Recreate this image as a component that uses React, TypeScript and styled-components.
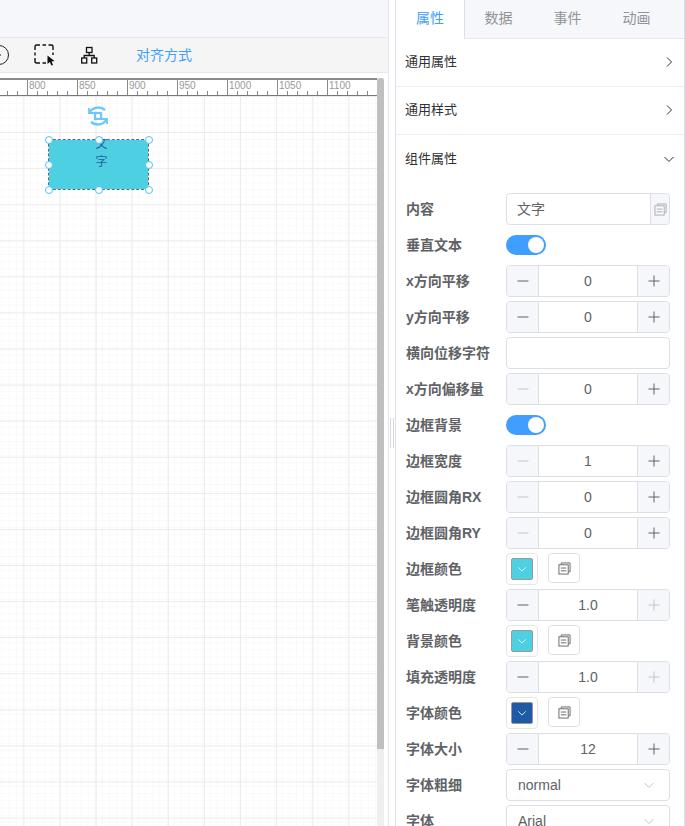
import React from "react";
import styled, { createGlobalStyle } from "styled-components";

const Global = createGlobalStyle`
  html, body {
    margin: 0;
    padding: 0;
    background: #fff;
    overflow: hidden;
  }
  * { box-sizing: border-box; }
  #root {
    font-family: "Liberation Sans", "Noto Sans CJK SC", sans-serif;
  }
`;

const Page = styled.div`
  width: 685px;
  height: 826px;
  display: flex;
  overflow: hidden;
`;

const Left = styled.div`
  width: 388px;
  height: 100%;
  display: flex;
  flex-direction: column;
  flex: none;
`;

const TopBar = styled.div`
  height: 38px;
  background: #f5f7fa;
  border-bottom: 1px solid #e4e7ed;
  flex: none;
`;

const Toolbar = styled.div`
  height: 35px;
  background: #f5f5f5;
  border-bottom: 1px solid #e4e7ed;
  display: flex;
  align-items: center;
  flex: none;
`;

const ToolIcon = styled.svg<{ $ml: number }>`
  margin-left: ${(p) => p.$ml}px;
  flex: none;
  display: block;
`;

const AlignText = styled.span`
  margin-left: 37px;
  padding-bottom: 3px;
  font-size: 14px;
  color: #409eff;
`;

const CanvasWrap = styled.div`
  margin-top: 5px;
  flex: 1;
  display: flex;
  min-height: 0;
`;

const CanvasCol = styled.div`
  width: 377px;
  flex: none;
  display: flex;
  flex-direction: column;
  overflow: hidden;
`;

const Ruler = styled.div`
  height: 18px;
  flex: none;
  display: flex;
  border-top: 2px solid #8a8a8a;
  border-bottom: 1px solid #777;
  padding-left: 27px;
  background-image: repeating-linear-gradient(
    to right,
    #8a8a8a 0,
    #8a8a8a 1px,
    transparent 1px,
    transparent 10px
  );
  background-size: 100% 4px;
  background-position: 7px bottom;
  background-repeat: no-repeat;
`;

const RulerCell = styled.div`
  width: 50px;
  flex: none;
  border-left: 1px solid #8a8a8a;
  font-size: 10px;
  line-height: 11px;
  color: #999;
  padding-left: 1px;
  overflow: hidden;
`;

const Grid = styled.div`
  position: relative;
  flex: 1;
  background-color: #fff;
  background-image:
    linear-gradient(to right, #ebebeb 1px, transparent 1px),
    linear-gradient(to bottom, #ebebeb 1px, transparent 1px),
    linear-gradient(to right, #f9f9f9 1px, transparent 1px),
    linear-gradient(to bottom, #f9f9f9 1px, transparent 1px);
  background-size: 36.12px 36.08px, 36.12px 36.08px, 7.2px 7.2px, 7.2px 7.2px;
  background-position: 23.4px 0, 0 0, 1.4px 0, 0 0;
`;

const RotateIcon = styled.svg`
  position: absolute;
  left: 87px;
  top: 9px;
`;

const Shape = styled.div`
  position: absolute;
  left: 48px;
  top: 43px;
  width: 101px;
  height: 51px;
  background: linear-gradient(#4dd0e1, #4dd0e1) padding-box, #fff border-box;
  border: 1px dashed #5a6a78;
  box-shadow: inset 0 1px 0 #5cc3f7;
  color: #2b5ea7;
  font-size: 12px;
  line-height: 17px;
  display: flex;
  flex-direction: column;
  align-items: center;
`;

const ShapeChar = styled.span`
  display: block;
  height: 18px;
  margin-left: 6px;
  position: relative;
  top: -4px;
`;

const Handle = styled.div<{ $x: number; $y: number }>`
  position: absolute;
  left: ${(p) => p.$x - 4}px;
  top: ${(p) => p.$y - 4.5}px;
  width: 8px;
  height: 8px;
  border-radius: 50%;
  background: #fff;
  border: 1px solid #4fc3f7;
`;

const ScrollTrack = styled.div`
  width: 7px;
  flex: none;
  background: #efefef;
`;

const ScrollThumb = styled.div`
  height: 671px;
  background: #bfbfbf;
  border-radius: 3px 3px 0 0;
`;

const Gutter = styled.div`
  width: 4px;
  flex: none;
`;

const Divider = styled.div`
  width: 7px;
  flex: none;
  border-left: 1px solid #e4e7ed;
  display: flex;
  align-items: flex-start;
  justify-content: center;
  padding-top: 418px;
`;

const Grip = styled.div`
  width: 4px;
  height: 30px;
  border-left: 1px solid #d6d8dc;
  border-right: 1px solid #d6d8dc;
`;

const Panel = styled.div`
  width: 290px;
  flex: none;
  height: 100%;
  border-left: 1px solid #dcdfe6;
  border-right: 1px solid #dcdfe6;
  display: flex;
  flex-direction: column;
  overflow: hidden;
`;

const Tabs = styled.div`
  display: flex;
  height: 39px;
  flex: none;
  background: #f5f7fa;
  border-bottom: 1px solid #e4e7ed;
`;

const Tab = styled.div<{ $active?: boolean }>`
  width: 69px;
  height: ${(p) => (p.$active ? "39px" : "38px")};
  flex: none;
  text-align: center;
  line-height: 36px;
  font-size: 14px;
  color: ${(p) => (p.$active ? "#409eff" : "#909399")};
  background: ${(p) => (p.$active ? "#fff" : "transparent")};
  border-right: ${(p) => (p.$active ? "1px solid #dcdfe6" : "none")};
  margin-right: ${(p) => (p.$active ? "-1px" : "0")};
`;

const Section = styled.div`
  height: 48px;
  flex: none;
  display: flex;
  align-items: center;
  justify-content: space-between;
  padding: 0 9px 1px;
  font-size: 13px;
  color: #303133;
  border-bottom: 1px solid #ebeef5;
`;

const OpenSection = styled(Section)`
  border-bottom: none;
`;

const SectionTitle = styled.span`
  padding-bottom: 3px;
`;

const Rows = styled.div`
  display: flex;
  flex-direction: column;
  gap: 4px;
  padding: 10px 14px 0 10px;
`;

const Row = styled.div`
  display: flex;
  align-items: center;
  height: 32px;
  flex: none;
`;

const Label = styled.div`
  width: 100px;
  flex: none;
  font-size: 14px;
  font-weight: 700;
  color: #606266;
  padding-bottom: 2px;
`;

const TextField = styled.div`
  width: 164px;
  height: 32px;
  border: 1px solid #dcdfe6;
  border-radius: 4px;
  display: flex;
  align-items: center;
  font-size: 14px;
  color: #606266;
  padding-left: 10px;
`;

const FieldText = styled.span`
  padding-bottom: 2px;
`;

const Append = styled.div`
  margin-left: auto;
  width: 19px;
  height: 100%;
  background: #f5f7fa;
  border-left: 1px solid #dcdfe6;
  border-radius: 0 4px 4px 0;
  display: flex;
  align-items: center;
  justify-content: center;
`;

const Switch = styled.div`
  width: 40px;
  height: 20px;
  border-radius: 10px;
  background: #409eff;
  position: relative;
`;

const Knob = styled.div`
  position: absolute;
  right: 2px;
  top: 2px;
  width: 16px;
  height: 16px;
  border-radius: 50%;
  background: #fff;
`;

const Stepper = styled.div`
  width: 164px;
  height: 32px;
  border: 1px solid #dcdfe6;
  border-radius: 4px;
  display: flex;
  align-items: center;
  overflow: hidden;
`;

const StepButton = styled.div<{ $side: "l" | "r"; $off?: boolean }>`
  width: 32px;
  height: 100%;
  flex: none;
  background: #f5f7fa;
  display: flex;
  align-items: center;
  justify-content: center;
  color: ${(p) => (p.$off ? "#c0c4cc" : "#606266")};
  ${(p) => (p.$side === "l" ? "border-right: 1px solid #dcdfe6;" : "border-left: 1px solid #dcdfe6;")}
`;

const StepValue = styled.div`
  flex: 1;
  text-align: center;
  font-size: 14px;
  color: #606266;
`;

const ColorBox = styled.div`
  width: 32px;
  height: 32px;
  border: 1px solid #e6e6e6;
  border-radius: 4px;
  padding: 4px;
  flex: none;
`;

const ColorFill = styled.div<{ $color: string }>`
  width: 100%;
  height: 100%;
  background: ${(p) => p.$color};
  border: 1px solid #999;
  border-radius: 2px;
  display: flex;
  align-items: center;
  justify-content: center;
`;

const CopyButton = styled.div`
  width: 32px;
  height: 30px;
  margin-left: 10px;
  border: 1px solid #dcdfe6;
  border-radius: 4px;
  display: flex;
  align-items: center;
  justify-content: center;
  flex: none;
  align-self: flex-start;
`;

const Select = styled.div`
  width: 164px;
  height: 32px;
  border: 1px solid #dcdfe6;
  border-radius: 4px;
  display: flex;
  align-items: center;
  justify-content: space-between;
  padding: 0 14px 0 11px;
  font-size: 14px;
  color: #606266;
  flex: none;
`;

const Chevron = ({ dir, color = "#303133", size = 12 }: { dir: "right" | "down"; color?: string; size?: number }) => (
  <svg width={size} height={size} viewBox="0 0 12 12" fill="none" stroke={color} strokeWidth="1">
    <path d={dir === "right" ? "M4 1.5 L8.5 6 L4 10.5" : "M1.5 4 L6 8.5 L10.5 4"} />
  </svg>
);

const CopyIcon = ({ color = "#606266" }: { color?: string }) => (
  <svg width="13" height="13" viewBox="0 0 14 14" fill="none" stroke={color} strokeWidth="1">
    <path d="M3.5 2.5 V1 H13 V10.5 H11.5" />
    <rect x="1" y="3" width="10" height="10" />
    <path d="M3 6.5 H9 M3 9.5 H9" />
  </svg>
);

const Minus = () => (
  <svg width="12" height="12" viewBox="0 0 12 12" stroke="currentColor" strokeWidth="1">
    <path d="M0.5 6 H11.5" />
  </svg>
);

const Plus = () => (
  <svg width="12" height="12" viewBox="0 0 12 12" stroke="currentColor" strokeWidth="1">
    <path d="M0.5 6 H11.5 M6 0.5 V11.5" />
  </svg>
);

const Num = ({ label, value, minusOff, plusOff }: { label: string; value: string; minusOff?: boolean; plusOff?: boolean }) => (
  <Row>
    <Label>{label}</Label>
    <Stepper>
      <StepButton $side="l" $off={minusOff}><Minus /></StepButton>
      <StepValue>{value}</StepValue>
      <StepButton $side="r" $off={plusOff}><Plus /></StepButton>
    </Stepper>
  </Row>
);

const ColorRow = ({ label, color }: { label: string; color: string }) => (
  <Row>
    <Label>{label}</Label>
    <ColorBox>
      <ColorFill $color={color}><Chevron dir="down" color="#fff" size={10} /></ColorFill>
    </ColorBox>
    <CopyButton><CopyIcon /></CopyButton>
  </Row>
);

const SwitchRow = ({ label }: { label: string }) => (
  <Row>
    <Label>{label}</Label>
    <Switch><Knob /></Switch>
  </Row>
);

const SelectRow = ({ label, value }: { label: string; value: string }) => (
  <Row>
    <Label>{label}</Label>
    <Select>
      {value}
      <Chevron dir="down" color="#c0c4cc" />
    </Select>
  </Row>
);

const rulerMarks = ["800", "850", "900", "950", "1000", "1050", "1100"];

const handles = [
  [0, 0], [50, 0], [100, 0],
  [0, 25], [100, 25],
  [0, 50], [50, 50], [100, 50],
];

export default function App() {
  return (
    <Page>
      <Global />
      <Left>
        <TopBar />
        <Toolbar>
          <ToolIcon $ml={-11} width="20" height="20" viewBox="0 0 20 20" fill="none" stroke="#222" strokeWidth="1">
            <circle cx="10" cy="10" r="9.5" />
            <circle cx="11" cy="10" r="0.4" fill="#222" />
          </ToolIcon>
          <ToolIcon $ml={25} width="22" height="22" viewBox="0 0 22 22" fill="none">
            <path
              d="M1 6 V2.5 Q1 1 2.5 1 H6 M8.5 1 H12 M14.5 1 H17.5 Q19 1 19 2.5 V6 M19 8.5 V11 M6 19 H2.5 Q1 19 1 17.5 V14 M1 11.5 V8.5 M8.5 19 H12"
              stroke="#111"
              strokeWidth="1.4"
            />
            <path d="M13.5 11.5 L20.5 17 L17.6 17.5 L19 21 L17.4 21.5 L15.8 18 L13.5 20 Z" fill="#111" />
          </ToolIcon>
          <ToolIcon $ml={25} width="18" height="18" viewBox="0 0 18 18" fill="none" stroke="#111" strokeWidth="1.3">
            <rect x="5.5" y="1.5" width="5.5" height="5" />
            <rect x="0.7" y="12" width="5" height="5" />
            <rect x="10.7" y="12" width="5" height="5" />
            <path d="M8.2 6.5 V9.5 M3.2 12 V9.5 H13.2 V12" />
          </ToolIcon>
          <AlignText>对齐方式</AlignText>
        </Toolbar>
        <CanvasWrap>
          <CanvasCol>
            <Ruler>
              {rulerMarks.map((m) => (
                <RulerCell key={m}>{m}</RulerCell>
              ))}
            </Ruler>
            <Grid>
              <RotateIcon width="22" height="22" viewBox="0 0 22 22" fill="none" stroke="#6cc8f8" strokeWidth="2.4">
                <path d="M3 7 C6 1.5 14 1.5 18 5" />
                <path d="M19 15 C16 20.5 8 20.5 4 17" />
                <path d="M2 3 V8 H7" strokeWidth="1.8" />
                <path d="M20 19 V14 H15" strokeWidth="1.8" />
                <rect x="8" y="8" width="6" height="6" strokeWidth="2.2" />
              </RotateIcon>
              <Shape>
                <ShapeChar>文</ShapeChar>
                <ShapeChar>字</ShapeChar>
                {handles.map(([x, y]) => (
                  <Handle key={`${x}-${y}`} $x={x} $y={y} />
                ))}
              </Shape>
            </Grid>
          </CanvasCol>
          <ScrollTrack>
            <ScrollThumb />
          </ScrollTrack>
          <Gutter />
        </CanvasWrap>
      </Left>
      <Divider>
        <Grip />
      </Divider>
      <Panel>
        <Tabs>
          <Tab $active>属性</Tab>
          <Tab>数据</Tab>
          <Tab>事件</Tab>
          <Tab>动画</Tab>
        </Tabs>
        <Section><SectionTitle>通用属性</SectionTitle><Chevron dir="right" /></Section>
        <Section><SectionTitle>通用样式</SectionTitle><Chevron dir="right" /></Section>
        <OpenSection><SectionTitle>组件属性</SectionTitle><Chevron dir="down" /></OpenSection>
        <Rows>
          <Row>
            <Label>内容</Label>
            <TextField>
              <FieldText>文字</FieldText>
              <Append><CopyIcon color="#a8abb2" /></Append>
            </TextField>
          </Row>
          <SwitchRow label="垂直文本" />
          <Num label="x方向平移" value="0" />
          <Num label="y方向平移" value="0" />
          <Row>
            <Label>横向位移字符</Label>
            <TextField />
          </Row>
          <Num label="x方向偏移量" value="0" minusOff />
          <SwitchRow label="边框背景" />
          <Num label="边框宽度" value="1" minusOff />
          <Num label="边框圆角RX" value="0" minusOff />
          <Num label="边框圆角RY" value="0" minusOff />
          <ColorRow label="边框颜色" color="#4dd0e1" />
          <Num label="笔触透明度" value="1.0" plusOff />
          <ColorRow label="背景颜色" color="#4dd0e1" />
          <Num label="填充透明度" value="1.0" plusOff />
          <ColorRow label="字体颜色" color="#1f5aa6" />
          <Num label="字体大小" value="12" />
          <SelectRow label="字体粗细" value="normal" />
          <SelectRow label="字体" value="Arial" />
        </Rows>
      </Panel>
    </Page>
  );
}
